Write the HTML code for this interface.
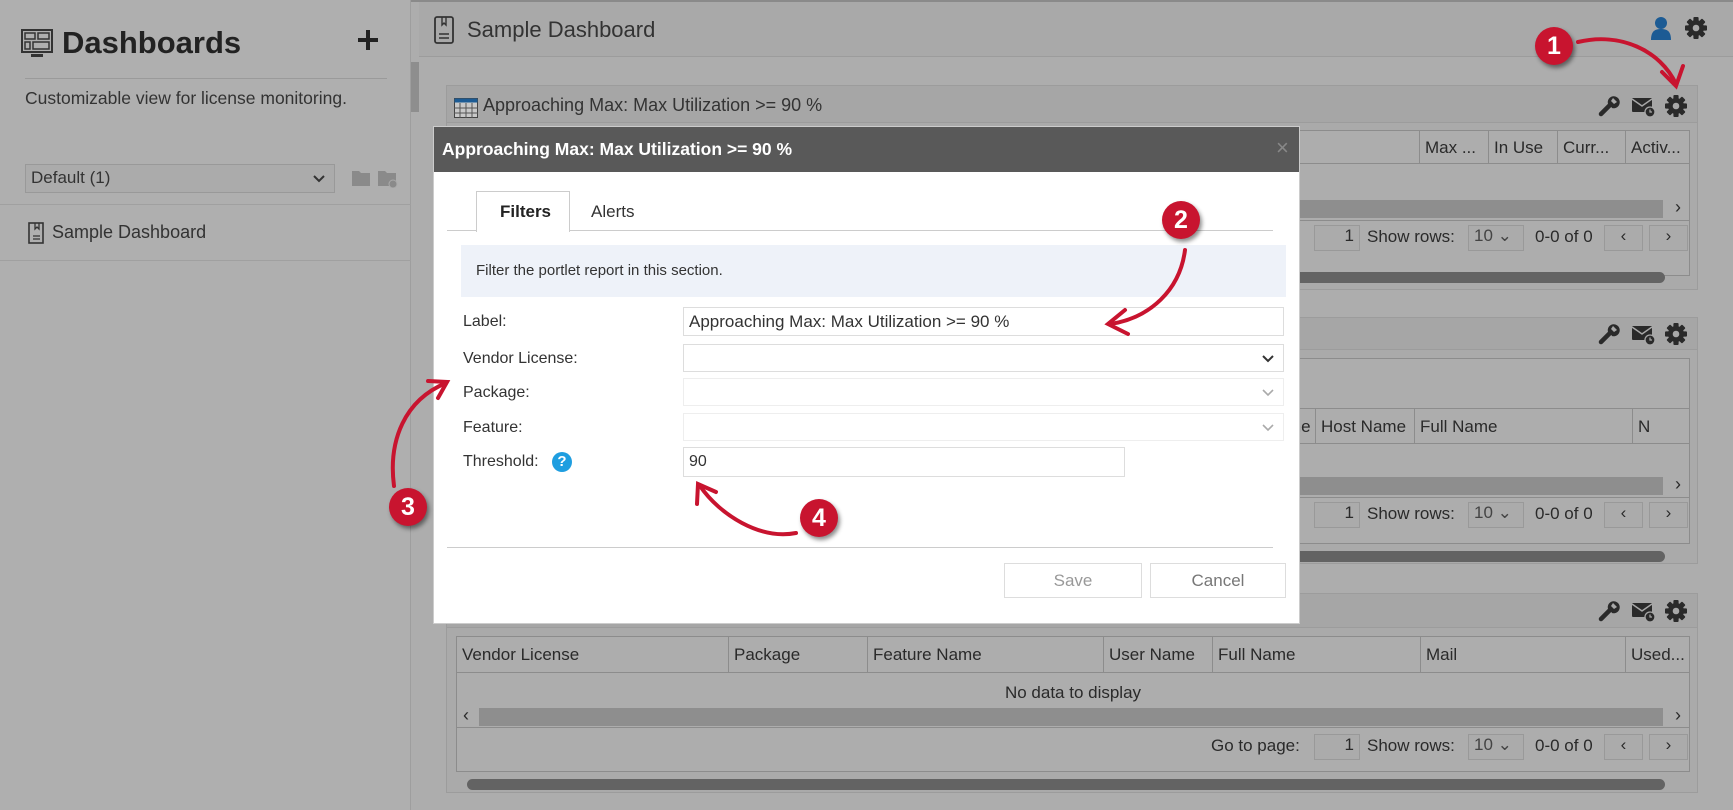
<!DOCTYPE html>
<html><head><meta charset="utf-8"><style>
*{box-sizing:border-box;margin:0;padding:0}
body{width:1733px;height:810px;overflow:hidden;background:#adadad;font-family:"Liberation Sans",sans-serif;color:#2a2a2a;position:relative}
.a{position:absolute}
.t{position:absolute;white-space:nowrap}
.line{position:absolute;background:#999}
.port{position:absolute;left:446px;width:1252px;border:1px solid #9c9c9c;background:#aaaaaa}
.ph{position:absolute;left:0;right:0;top:0;background:#a6a6a6;border-bottom:1px solid #9c9c9c}
.tbl{position:absolute;left:9px;right:7px;border:1px solid #8c8c8c;background:#adadad}
.cell{position:absolute;border-left:1px solid #8c8c8c;font-size:17px;padding-left:5px;white-space:nowrap}
.box{position:absolute;border:1px solid #999;background:#ababab}
.sb{position:absolute;height:18px;background:#8e8e8e}
.scroll{position:absolute;height:11px;border-radius:6px;background:#636363}
.in{position:absolute;border:1px solid #ddd;background:#fff}
.lbl{position:absolute;left:463px;font-size:16px;color:#333}
.num{position:absolute;width:38px;height:38px;border-radius:50%;background:#c8142f;color:#fff;font-weight:bold;font-size:25px;text-align:center;line-height:38px;box-shadow:2px 3px 4px rgba(0,0,0,.45)}
</style></head><body>
<svg width="0" height="0" style="position:absolute">
 <defs>
  <g id="gear"><g fill="#2a2a2a"><rect x="-2.6" y="-11" width="5.2" height="22" rx="1"/><rect x="-2.6" y="-11" width="5.2" height="22" rx="1" transform="rotate(45)"/><rect x="-2.6" y="-11" width="5.2" height="22" rx="1" transform="rotate(90)"/><rect x="-2.6" y="-11" width="5.2" height="22" rx="1" transform="rotate(135)"/><circle r="8"/></g><circle r="3.3" fill="#a8a8a8"/></g>
  <g id="wrench"><path d="M3 19 L12 10" stroke="#2a2a2a" stroke-width="4.5" stroke-linecap="round"/><path d="M10 9 A6 6 0 1 1 14 13 L12 10z" fill="#2a2a2a"/><path d="M15 3 L13 6 L16 9 L19 7" fill="#a8a8a8"/></g>
  <g id="mail"><rect x="0" y="2" width="20" height="14" rx="1" fill="#2a2a2a"/><path d="M0 3 L10 10 L20 3" stroke="#a8a8a8" stroke-width="1.5" fill="none"/><circle cx="18" cy="16" r="5" fill="#2a2a2a" stroke="#a8a8a8" stroke-width="1.3"/><path d="M18 13.5v2.5h2" stroke="#a8a8a8" stroke-width="1.2" fill="none"/></g>
 </defs>
</svg>
<div class="a" style="left:0;top:0;width:1733px;height:2px;background:#8a8a8a"></div>
<!-- sidebar -->
<div class="a" style="left:0;top:0;width:411px;height:810px;background:#afafaf;border-right:1px solid #9e9e9e"></div>
<svg class="a" style="left:21px;top:29px" width="32" height="30" viewBox="0 0 32 30"><rect x="1" y="1" width="30" height="22" fill="none" stroke="#333" stroke-width="2"/><rect x="4" y="4" width="10" height="6" fill="none" stroke="#333" stroke-width="1.5"/><rect x="17" y="4" width="11" height="6" fill="none" stroke="#333" stroke-width="1.5"/><rect x="4" y="13" width="5" height="7" fill="none" stroke="#333" stroke-width="1.5"/><rect x="12" y="13" width="16" height="7" fill="none" stroke="#333" stroke-width="1.5"/><rect x="10" y="25" width="12" height="3" fill="#333"/></svg>
<div class="t" style="left:62px;top:25px;font-size:31px;font-weight:bold;color:#222">Dashboards</div>
<svg class="a" style="left:357px;top:29px" width="22" height="22"><path d="M11 1v20M1 11h20" stroke="#222" stroke-width="4"/></svg>
<div class="line" style="left:25px;top:78px;width:362px;height:1px;background:#9a9a9a"></div>
<div class="t" style="left:25px;top:88px;font-size:17.5px;color:#333">Customizable view for license monitoring.</div>
<div class="box" style="left:25px;top:164px;width:310px;height:29px;font-size:17px;padding:3px 5px;color:#333">Default (1)<svg style="position:absolute;right:9px;top:10px" width="12" height="8"><path d="M1 1l5 5 5-5" stroke="#333" stroke-width="2" fill="none"/></svg></div>
<svg class="a" style="left:351px;top:168px" width="48" height="20"><path d="M1 3h7l2 2h9v13H1z" fill="#8a8a8a"/><path d="M27 3h7l2 2h9v13H27z" fill="#8a8a8a"/><circle cx="42" cy="16" r="4" fill="#8a8a8a" stroke="#aaa"/></svg>
<div class="line" style="left:0;top:204px;width:411px;height:1px;background:#a0a0a0"></div>
<svg class="a" style="left:28px;top:222px" width="16" height="22"><rect x="1" y="1" width="14" height="20" fill="none" stroke="#333" stroke-width="1.6"/><path d="M7 1v6l2-2 2 2V1M5 14h7M5 17h7" stroke="#333" stroke-width="1.3" fill="none"/></svg>
<div class="t" style="left:52px;top:222px;font-size:18px;color:#333">Sample Dashboard</div>
<div class="line" style="left:0;top:260px;width:411px;height:1px;background:#a0a0a0"></div>
<div class="a" style="left:411px;top:62px;width:8px;height:50px;background:#8e8e8e"></div>
<!-- main header -->
<div class="a" style="left:419px;top:2px;width:1314px;height:55px;background:#a9a9a9;border-bottom:1px solid #9c9c9c"></div>
<svg class="a" style="left:434px;top:16px" width="20" height="28"><rect x="1" y="1" width="18" height="26" rx="2" fill="none" stroke="#333" stroke-width="1.8"/><path d="M8 1v8l2-2 2 2V1M5 18h10M5 22h10" stroke="#333" stroke-width="1.4" fill="none"/></svg>
<div class="t" style="left:467px;top:17px;font-size:22px;color:#333">Sample Dashboard</div>
<svg class="a" style="left:1650px;top:16px" width="22" height="24"><circle cx="11" cy="7" r="6" fill="#1c5b94"/><path d="M1 24c0-9 4-11 10-11s10 2 10 11z" fill="#1c5b94"/></svg>
<svg class="a" style="left:1684px;top:16px" width="24" height="24"><use href="#gear" transform="translate(12 12)"/></svg>

<!-- portlet 1 -->
<div class="port" style="top:85px;height:205px">
 <div class="ph" style="height:37px"></div>
 <svg class="a" style="left:7px;top:12px" width="24" height="20"><rect x="0.5" y="0.5" width="23" height="19" fill="#c9c9c9" stroke="#444"/><rect x="0.5" y="0.5" width="23" height="4" fill="#1c5b94"/><path d="M6 5v15M12 5v15M18 5v15M0 10h24M0 15h24" stroke="#555"/></svg>
 <div class="t" style="left:36px;top:9px;font-size:18px;color:#333">Approaching Max: Max Utilization &gt;= 90 %</div>
 <svg class="a" style="left:1151px;top:8px" width="110" height="24"><use href="#wrench" transform="translate(0 1)"/><use href="#mail" transform="translate(34 2)"/><use href="#gear" transform="translate(78 12)"/></svg>
 <div class="tbl" style="top:44px;height:146px">
  <div class="a" style="left:0;right:0;top:0;height:33px;border-bottom:1px solid #8c8c8c"></div>
  <div class="cell" style="left:962px;top:0;height:33px;line-height:33px">Max ...</div>
  <div class="cell" style="left:1031px;top:0;height:33px;line-height:33px">In Use</div>
  <div class="cell" style="left:1100px;top:0;height:33px;line-height:33px">Curr...</div>
  <div class="cell" style="left:1168px;top:0;height:33px;line-height:33px">Activ...</div>
  <div class="sb" style="left:0;right:26px;top:69px"></div>
  <div class="t" style="right:8px;top:66px;font-size:18px">&#8250;</div>
  <div class="a" style="left:0;right:0;top:89px;height:1px;background:#8c8c8c"></div>
  <div class="box" style="left:857px;top:94px;width:46px;height:26px;text-align:right;padding-right:5px;font-size:17px">1</div>
  <div class="t" style="left:910px;top:96px;font-size:17px">Show rows:</div>
  <div class="box" style="left:1011px;top:94px;width:56px;height:26px;font-size:17px;padding-left:5px;color:#444">10 &#8964;</div>
  <div class="t" style="left:1078px;top:96px;font-size:17px">0-0 of 0</div>
  <div class="box" style="left:1147px;top:94px;width:39px;height:26px;text-align:center;font-size:17px">&#8249;</div>
  <div class="box" style="left:1192px;top:94px;width:39px;height:26px;text-align:center;font-size:17px">&#8250;</div>
 </div>
 <div class="scroll" style="left:20px;right:32px;top:186px"></div>
</div>

<!-- portlet 2 -->
<div class="port" style="top:317px;height:247px">
 <div class="ph" style="height:32px"></div>
 <svg class="a" style="left:1151px;top:4px" width="110" height="24"><use href="#wrench" transform="translate(0 1)"/><use href="#mail" transform="translate(34 2)"/><use href="#gear" transform="translate(78 12)"/></svg>
 <div class="tbl" style="top:40px;height:186px">
  <div class="a" style="left:0;right:0;top:49px;height:36px;border-top:1px solid #8c8c8c;border-bottom:1px solid #8c8c8c"></div>
  <div class="t" style="left:830px;top:58px;font-size:17px">me</div>
  <div class="cell" style="left:858px;top:50px;height:35px;line-height:35px">Host Name</div>
  <div class="cell" style="left:957px;top:50px;height:35px;line-height:35px">Full Name</div>
  <div class="cell" style="left:1175px;top:50px;height:35px;line-height:35px">N</div>
  <div class="sb" style="left:0;right:26px;top:118px"></div>
  <div class="t" style="right:8px;top:115px;font-size:18px">&#8250;</div>
  <div class="a" style="left:0;right:0;top:138px;height:1px;background:#8c8c8c"></div>
  <div class="box" style="left:857px;top:143px;width:46px;height:26px;text-align:right;padding-right:5px;font-size:17px">1</div>
  <div class="t" style="left:910px;top:145px;font-size:17px">Show rows:</div>
  <div class="box" style="left:1011px;top:143px;width:56px;height:26px;font-size:17px;padding-left:5px;color:#444">10 &#8964;</div>
  <div class="t" style="left:1078px;top:145px;font-size:17px">0-0 of 0</div>
  <div class="box" style="left:1147px;top:143px;width:39px;height:26px;text-align:center;font-size:17px">&#8249;</div>
  <div class="box" style="left:1192px;top:143px;width:39px;height:26px;text-align:center;font-size:17px">&#8250;</div>
 </div>
 <div class="scroll" style="left:20px;right:32px;top:233px"></div>
</div>

<!-- portlet 3 -->
<div class="port" style="top:593px;height:200px">
 <div class="ph" style="height:34px"></div>
 <svg class="a" style="left:1151px;top:5px" width="110" height="24"><use href="#wrench" transform="translate(0 1)"/><use href="#mail" transform="translate(34 2)"/><use href="#gear" transform="translate(78 12)"/></svg>
 <div class="tbl" style="top:42px;height:136px">
  <div class="a" style="left:0;right:0;top:0;height:36px;border-bottom:1px solid #8c8c8c"></div>
  <div class="cell" style="left:0;top:0;height:36px;line-height:36px;border:none">Vendor License</div>
  <div class="cell" style="left:271px;top:0;height:36px;line-height:36px">Package</div>
  <div class="cell" style="left:410px;top:0;height:36px;line-height:36px">Feature Name</div>
  <div class="cell" style="left:646px;top:0;height:36px;line-height:36px">User Name</div>
  <div class="cell" style="left:755px;top:0;height:36px;line-height:36px">Full Name</div>
  <div class="cell" style="left:963px;top:0;height:36px;line-height:36px">Mail</div>
  <div class="cell" style="left:1168px;top:0;height:36px;line-height:36px">Used...</div>
  <div class="t" style="left:0;right:0;top:46px;text-align:center;font-size:17px">No data to display</div>
  <div class="sb" style="left:22px;right:26px;top:71px"></div>
  <div class="t" style="left:6px;top:68px;font-size:18px">&#8249;</div>
  <div class="t" style="right:8px;top:68px;font-size:18px">&#8250;</div>
  <div class="a" style="left:0;right:0;top:90px;height:1px;background:#8c8c8c"></div>
  <div class="t" style="left:754px;top:99px;font-size:17px">Go to page:</div>
  <div class="box" style="left:857px;top:97px;width:46px;height:26px;text-align:right;padding-right:5px;font-size:17px">1</div>
  <div class="t" style="left:910px;top:99px;font-size:17px">Show rows:</div>
  <div class="box" style="left:1011px;top:97px;width:56px;height:26px;font-size:17px;padding-left:5px;color:#444">10 &#8964;</div>
  <div class="t" style="left:1078px;top:99px;font-size:17px">0-0 of 0</div>
  <div class="box" style="left:1147px;top:97px;width:39px;height:26px;text-align:center;font-size:17px">&#8249;</div>
  <div class="box" style="left:1192px;top:97px;width:39px;height:26px;text-align:center;font-size:17px">&#8250;</div>
 </div>
 <div class="scroll" style="left:20px;right:32px;top:185px"></div>
</div>

<!-- modal -->
<div class="a" style="left:433px;top:126px;width:867px;height:498px;background:#fff;border:1px solid #ccc">
 <div class="a" style="left:0;top:0;right:0;height:45px;background:#595959"></div>
 <div class="t" style="left:8px;top:12px;font-size:17.5px;font-weight:bold;color:#fff">Approaching Max: Max Utilization &gt;= 90 %</div>
 <div class="t" style="left:842px;top:8px;font-size:22px;color:#888">×</div>
 <div class="a" style="left:13px;top:103px;width:826px;height:1px;background:#ccc"></div>
 <div class="a" style="left:42px;top:64px;width:94px;height:41px;border:1px solid #ccc;border-bottom:none;background:#fff"></div>
 <div class="t" style="left:66px;top:75px;font-size:17px;font-weight:bold;color:#222">Filters</div>
 <div class="t" style="left:157px;top:75px;font-size:17px;color:#333">Alerts</div>
 <div class="a" style="left:27px;top:118px;width:825px;height:52px;background:#eef2f9"></div>
 <div class="t" style="left:42px;top:135px;font-size:15px;color:#333">Filter the portlet report in this section.</div>
 <div class="in" style="left:249px;top:180px;width:601px;height:29px;font-size:17px;padding:4px 5px;color:#333">Approaching Max: Max Utilization &gt;= 90 %</div>
 <div class="in" style="left:249px;top:217px;width:601px;height:28px"><svg style="position:absolute;right:9px;top:10px" width="12" height="8"><path d="M1 1l5 5 5-5" stroke="#333" stroke-width="2" fill="none"/></svg></div>
 <div class="in" style="left:249px;top:251px;width:601px;height:28px;border-color:#eee"><svg style="position:absolute;right:9px;top:10px" width="12" height="8"><path d="M1 1l5 5 5-5" stroke="#aaa" stroke-width="1.6" fill="none"/></svg></div>
 <div class="in" style="left:249px;top:286px;width:601px;height:28px;border-color:#eee"><svg style="position:absolute;right:9px;top:10px" width="12" height="8"><path d="M1 1l5 5 5-5" stroke="#aaa" stroke-width="1.6" fill="none"/></svg></div>
 <div class="in" style="left:249px;top:320px;width:442px;height:30px;font-size:16px;padding:5px 5px;color:#333">90</div>
 <div class="a" style="left:13px;top:420px;width:826px;height:1px;background:#ccc"></div>
 <div class="in" style="left:570px;top:436px;width:138px;height:35px;text-align:center;line-height:33px;font-size:17px;color:#999">Save</div>
 <div class="in" style="left:716px;top:436px;width:136px;height:35px;text-align:center;line-height:33px;font-size:17px;color:#777">Cancel</div>
</div>
<div class="lbl" style="top:313px">Label:</div>
<div class="lbl" style="top:350px">Vendor License:</div>
<div class="lbl" style="top:384px">Package:</div>
<div class="lbl" style="top:419px">Feature:</div>
<div class="lbl" style="top:453px">Threshold:</div>
<div class="a" style="left:552px;top:452px;width:20px;height:20px;border-radius:50%;background:#1f9ee0;color:#fff;font-weight:bold;font-size:15px;text-align:center;line-height:20px">?</div>

<!-- annotations -->
<svg class="a" style="left:0;top:0" width="1733" height="810" fill="none" stroke="#c8142f" stroke-width="4" stroke-linecap="round">
 <path d="M1578 42 C1620 32 1660 50 1676 84"/><path d="M1662 72 L1676 86 L1683 66"/>
 <path d="M1185 250 C1180 290 1150 318 1110 324"/><path d="M1125 310 L1108 324 L1128 334"/>
 <path d="M394 486 C388 440 405 400 446 383"/><path d="M428 381 L447 382 L438 398"/>
 <path d="M796 533 C760 540 720 515 700 486"/><path d="M697 504 L698 484 L716 492"/>
</svg>
<div class="num" style="left:1535px;top:27px">1</div>
<div class="num" style="left:1162px;top:201px">2</div>
<div class="num" style="left:389px;top:488px">3</div>
<div class="num" style="left:800px;top:499px">4</div>
</body></html>
